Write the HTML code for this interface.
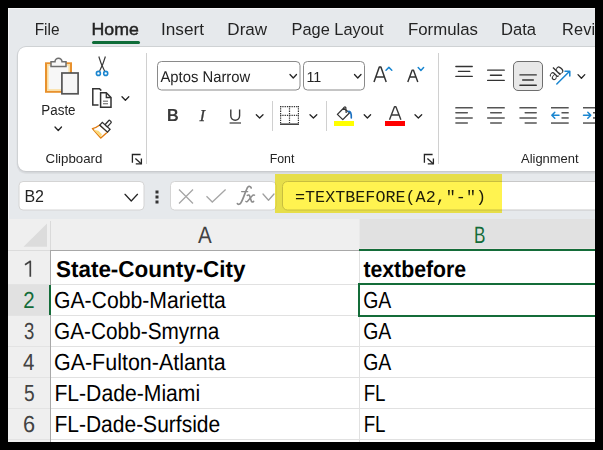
<!DOCTYPE html>
<html><head><meta charset="utf-8"><style>
html,body{margin:0;padding:0;background:#000;width:603px;height:450px;overflow:hidden}
svg{display:block}
text{white-space:pre}
</style></head><body>
<svg width="603" height="450" viewBox="0 0 603 450">
<rect x="0" y="0" width="603" height="450" fill="#000"/>
<rect x="8" y="8" width="587" height="434" fill="#e6e9ec"/>
<rect x="8" y="8" width="587" height="1" fill="#f4f5f6"/>
<rect x="8" y="8" width="1" height="434" fill="#f4f5f6"/>
<text x="34.65" y="35" font-family="Liberation Sans" font-size="16.3" font-weight="normal" fill="#242424" textLength="24.9" lengthAdjust="spacingAndGlyphs" >File</text>
<text x="160.94" y="35" font-family="Liberation Sans" font-size="16.3" font-weight="normal" fill="#242424" textLength="43.05" lengthAdjust="spacingAndGlyphs" >Insert</text>
<text x="227.35" y="35" font-family="Liberation Sans" font-size="16.3" font-weight="normal" fill="#242424" textLength="39.79" lengthAdjust="spacingAndGlyphs" >Draw</text>
<text x="291.49" y="35" font-family="Liberation Sans" font-size="16.3" font-weight="normal" fill="#242424" textLength="92.03" lengthAdjust="spacingAndGlyphs" >Page Layout</text>
<text x="407.97" y="35" font-family="Liberation Sans" font-size="16.3" font-weight="normal" fill="#242424" textLength="69.98" lengthAdjust="spacingAndGlyphs" >Formulas</text>
<text x="500.98" y="35" font-family="Liberation Sans" font-size="16.3" font-weight="normal" fill="#242424" textLength="35.06" lengthAdjust="spacingAndGlyphs" >Data</text>
<text x="562" y="35" font-family="Liberation Sans" font-size="16.3" font-weight="normal" fill="#242424" letter-spacing="0.2">Review</text>
<text x="91.53" y="35" font-family="Liberation Sans" font-size="16.5" font-weight="normal" fill="#242424" textLength="47.26" lengthAdjust="spacingAndGlyphs" stroke="#242424" stroke-width="0.45">Home</text>
<rect x="92" y="41" width="48" height="3" rx="1.5" fill="#0f6d39"/>
<rect x="16.5" y="47" width="620" height="127" rx="9.5" fill="#dcdfe2"/>
<rect x="17" y="46" width="620" height="127" rx="9" fill="#d5d8db"/>
<rect x="17.5" y="46.5" width="620" height="125.5" rx="8.5" fill="#c9cbce"/>
<rect x="18" y="47" width="620" height="124" rx="8" fill="#ffffff"/>
<rect x="146" y="53" width="1" height="111" fill="#d0d0d0"/>
<rect x="438" y="53" width="1" height="111" fill="#d0d0d0"/>
<rect x="272" y="101" width="1" height="30" fill="#d0d0d0"/>
<rect x="326" y="101" width="1" height="30" fill="#d0d0d0"/>
<text x="45.6" y="162.7" font-family="Liberation Sans" font-size="13" font-weight="normal" fill="#242424" textLength="56.73" lengthAdjust="spacingAndGlyphs" >Clipboard</text>
<text x="269.65" y="162.5" font-family="Liberation Sans" font-size="13" font-weight="normal" fill="#242424" textLength="24.78" lengthAdjust="spacingAndGlyphs" >Font</text>
<text x="521.0" y="162.5" font-family="Liberation Sans" font-size="13" font-weight="normal" fill="#242424" textLength="57.61" lengthAdjust="spacingAndGlyphs" >Alignment</text>
<path d="M132.4 162.8 V154.5 H140.6" fill="none" stroke="#242424" stroke-width="1.3"/><path d="M135.4 158.5 L141.2 163.8" fill="none" stroke="#242424" stroke-width="1.3"/><path d="M135.8 163.8 H141.4 V158.5" fill="none" stroke="#242424" stroke-width="1.3"/>
<path d="M424.4 162.8 V154.5 H432.6" fill="none" stroke="#242424" stroke-width="1.3"/><path d="M427.4 158.5 L433.2 163.8" fill="none" stroke="#242424" stroke-width="1.3"/><path d="M427.8 163.8 H433.4 V158.5" fill="none" stroke="#242424" stroke-width="1.3"/>
<rect x="46" y="63.3" width="25" height="28.5" fill="#f7f7f7" stroke="#e8912d" stroke-width="2"/>
<rect x="47.8" y="65" width="21.4" height="25" fill="none" stroke="#fbdc9a" stroke-width="1.5"/>
<path d="M51 61.8 H55 A3.5 3.5 0 0 1 62 61.8 H66 V66.5 H51 Z" fill="#f7f7f7" stroke="#6e6e6e" stroke-width="1.5"/>
<rect x="61.9" y="73" width="16.2" height="20.8" fill="#f7f7f7" stroke="#555" stroke-width="1.7"/>
<text x="41.34" y="115" font-family="Liberation Sans" font-size="14" font-weight="normal" fill="#242424" textLength="34.25" lengthAdjust="spacingAndGlyphs" >Paste</text>
<path d="M55 127 L58.25 130.5 L61.5 127" fill="none" stroke="#242424" stroke-width="1.3" stroke-linecap="round" stroke-linejoin="round"/>
<path d="M98.8 56.5 Q100.5 63 104.6 71" fill="none" stroke="#3a3a3a" stroke-width="1.15"/>
<path d="M105.4 56.5 Q103.7 63 99.6 71" fill="none" stroke="#3a3a3a" stroke-width="1.15"/>
<circle cx="98.4" cy="73.4" r="2" fill="none" stroke="#1a86d0" stroke-width="1.6"/>
<circle cx="105.7" cy="73.4" r="2" fill="none" stroke="#1a86d0" stroke-width="1.6"/>
<path d="M98.5 105 H92.8 V88.8 H99.5 L101.3 90.6" fill="none" stroke="#333" stroke-width="1.5"/>
<path d="M100.6 92.8 H106.3 L111 97.5 V107.2 H100.6 Z" fill="#fff" stroke="#333" stroke-width="1.5"/>
<path d="M106.3 92.8 V97.5 H111" fill="none" stroke="#333" stroke-width="1.3"/>
<rect x="103" y="100.6" width="5" height="1.2" fill="#777"/>
<rect x="103" y="103.1" width="5" height="1.2" fill="#777"/>
<path d="M122 96.8 L125.4 100.2 L128.8 96.8" fill="none" stroke="#242424" stroke-width="1.3" stroke-linecap="round" stroke-linejoin="round"/>
<g transform="translate(104.9 127.2) rotate(42)"><path d="M-5.2 1.8 L5.2 1.8 L4.2 10.8 L-8.3 9.4 Q-6 6 -5.2 1.8 Z" fill="#fff" stroke="#e07b10" stroke-width="1.4" stroke-linejoin="round"/><path d="M-6.8 9.4 L3.6 10.3 L2.6 7.3 L-2.5 7.0 Z" fill="#fbd97a"/><rect x="-5.2" y="-1.9" width="10.4" height="3.8" fill="#fff" stroke="#333" stroke-width="1.3"/><rect x="-1.6" y="-8.3" width="3.2" height="6.4" rx="1" fill="#fff" stroke="#333" stroke-width="1.3"/></g>
<rect x="157.5" y="61.5" width="142.5" height="28.5" rx="4" fill="#fff" stroke="#8a8a8a" stroke-width="1"/>
<text x="160.4" y="81.6" font-family="Liberation Sans" font-size="15.5" font-weight="normal" fill="#242424" textLength="89.83" lengthAdjust="spacingAndGlyphs" text-rendering="geometricPrecision">Aptos Narrow</text>
<path d="M290 74.5 L293.25 78 L296.5 74.5" fill="none" stroke="#242424" stroke-width="1.3" stroke-linecap="round" stroke-linejoin="round"/>
<rect x="303.5" y="61.5" width="61" height="28.5" rx="4" fill="#fff" stroke="#8a8a8a" stroke-width="1"/>
<text x="306.44" y="82" font-family="Liberation Sans" font-size="15" font-weight="normal" fill="#242424" textLength="14.88" lengthAdjust="spacingAndGlyphs" >11</text>
<path d="M354.5 74.5 L357.75 78 L361 74.5" fill="none" stroke="#242424" stroke-width="1.3" stroke-linecap="round" stroke-linejoin="round"/>
<path d="M374 82 L379.3 66.9 H380.9 L386.2 82 M376.2 77 H384" fill="none" stroke="#333" stroke-width="1.5" stroke-linejoin="round"/>
<path d="M386 70.2 L388.9 67.4 L391.8 70.2" fill="none" stroke="#1a86d0" stroke-width="1.5" stroke-linecap="round" stroke-linejoin="round"/>
<path d="M407.8 82 L412.2 70.1 H413.4 L417.8 82 M409.7 77 H416" fill="none" stroke="#333" stroke-width="1.45" stroke-linejoin="round"/>
<path d="M418.2 67.5 L420.9 70.5 L423.6 67.5" fill="none" stroke="#1a86d0" stroke-width="1.5" stroke-linecap="round" stroke-linejoin="round"/>
<text x="167" y="120.6" font-family="Liberation Sans" font-size="16.2" font-weight="bold" fill="#3a3a3a" >B</text>
<text x="199.5" y="120.5" font-family="Liberation Serif" font-size="17" font-weight="normal" fill="#3a3a3a" font-style="italic" stroke="#3a3a3a" stroke-width="0.25">I</text>
<path d="M230.8 109.5 V115.8 A4.4 4.4 0 0 0 239.6 115.8 V109.5" fill="none" stroke="#3a3a3a" stroke-width="1.4"/>
<rect x="229.6" y="122.3" width="11.4" height="1.4" fill="#555"/>
<path d="M256.3 114.8 L259.65 118 L263 114.8" fill="none" stroke="#242424" stroke-width="1.3" stroke-linecap="round" stroke-linejoin="round"/>
<g fill="none" stroke="#333" stroke-width="1.2" stroke-dasharray="1.3 1"><path d="M280.6 106 V123"/><path d="M298.4 106 V123"/><path d="M289.5 106 V123"/><path d="M280 106.6 H299"/><path d="M280 115.3 H299"/></g>
<rect x="280" y="123.4" width="19" height="1.6" fill="#444"/>
<path d="M310 114.8 L313.4 118 L316.8 114.8" fill="none" stroke="#242424" stroke-width="1.3" stroke-linecap="round" stroke-linejoin="round"/>
<path d="M337.4 114.4 L343.5 108.3 L349.6 112.8 L342.8 119.6 Z" fill="#fff" stroke="#333" stroke-width="1.3" stroke-linejoin="round"/>
<path d="M343.5 108.3 Q344.5 106 345.8 107.5 L346.2 113" fill="none" stroke="#333" stroke-width="1.2"/>
<path d="M348.3 111.5 Q351.5 110.5 351.3 118" fill="none" stroke="#1a6fc0" stroke-width="1.6" stroke-linecap="round"/>
<rect x="334" y="121" width="20" height="5" fill="#ffff00"/>
<path d="M364.2 114.8 L367.4 118 L370.6 114.8" fill="none" stroke="#242424" stroke-width="1.3" stroke-linecap="round" stroke-linejoin="round"/>
<path d="M389.5 119.7 L394.5 106.8 H395.9 L400.9 119.7 M391.5 115 H399" fill="none" stroke="#3a3a3a" stroke-width="1.4" stroke-linejoin="round"/>
<rect x="385" y="121" width="20" height="5" fill="#ff0000"/>
<path d="M415 114.8 L418.35 118 L421.7 114.8" fill="none" stroke="#242424" stroke-width="1.3" stroke-linecap="round" stroke-linejoin="round"/>
<rect x="455.2" y="65.8" width="17.69999999999999" height="1.4" rx="0.6" fill="#333"/><rect x="457.8" y="70.7" width="12.599999999999966" height="1.4" rx="0.6" fill="#333"/><rect x="455.2" y="75.7" width="17.69999999999999" height="1.4" rx="0.6" fill="#333"/>
<rect x="487" y="69.39999999999999" width="17.899999999999977" height="1.4" rx="0.6" fill="#333"/><rect x="489.8" y="74.5" width="12.399999999999977" height="1.4" rx="0.6" fill="#333"/><rect x="487" y="79.7" width="17.899999999999977" height="1.4" rx="0.6" fill="#333"/>
<rect x="513.5" y="61.5" width="29" height="29" rx="4.5" fill="#e8e8e8" stroke="#6e6e6e" stroke-width="1"/>
<rect x="519.3" y="74.2" width="17.600000000000023" height="1.4" rx="0.6" fill="#333"/><rect x="522" y="79.3" width="12" height="1.4" rx="0.6" fill="#333"/><rect x="519.3" y="84.6" width="17.600000000000023" height="1.4" rx="0.6" fill="#333"/>
<text x="0" y="0" font-family="Liberation Sans" font-size="14.5" fill="#333" transform="translate(553.6 81.6) rotate(-45)">ab</text>
<path d="M556.8 84 L569.6 71.2 M565 71.2 H569.8 V76" fill="none" stroke="#1a86d0" stroke-width="1.5" stroke-linecap="round" stroke-linejoin="round"/>
<path d="M578 74.6 L581.4 78.2 L584.8 74.6" fill="none" stroke="#242424" stroke-width="1.3" stroke-linecap="round" stroke-linejoin="round"/>
<rect x="455.2" y="107.05" width="17.69999999999999" height="1.5" rx="0.6" fill="#555"/><rect x="455.2" y="111.95" width="12.800000000000011" height="1.5" rx="0.6" fill="#555"/><rect x="455.2" y="117.15" width="17.69999999999999" height="1.5" rx="0.6" fill="#555"/><rect x="455.2" y="122.15" width="12.800000000000011" height="1.5" rx="0.6" fill="#555"/>
<rect x="487" y="107.05" width="17.899999999999977" height="1.5" rx="0.6" fill="#555"/><rect x="490" y="111.95" width="12" height="1.5" rx="0.6" fill="#555"/><rect x="487" y="117.15" width="17.899999999999977" height="1.5" rx="0.6" fill="#555"/><rect x="490" y="122.15" width="12" height="1.5" rx="0.6" fill="#555"/>
<rect x="519.3" y="107.05" width="17.600000000000023" height="1.5" rx="0.6" fill="#555"/><rect x="524.5" y="111.95" width="12.399999999999977" height="1.5" rx="0.6" fill="#555"/><rect x="519.3" y="117.15" width="17.600000000000023" height="1.5" rx="0.6" fill="#555"/><rect x="524.5" y="122.15" width="12.399999999999977" height="1.5" rx="0.6" fill="#555"/>
<rect x="551" y="107" width="17.7" height="1.5" fill="#555"/><rect x="561.5" y="112" width="7.2" height="1.5" fill="#555"/><rect x="561.5" y="117.2" width="7.2" height="1.5" fill="#555"/><rect x="551" y="122.3" width="17.7" height="1.5" fill="#555"/>
<path d="M559 115.3 H551.8 M554.8 112.3 L551.8 115.3 L554.8 118.3" fill="none" stroke="#1a86d0" stroke-width="1.5" stroke-linecap="round" stroke-linejoin="round"/>
<rect x="583" y="107" width="17.7" height="1.5" fill="#555"/><rect x="593" y="112" width="7.2" height="1.5" fill="#555"/><rect x="593" y="117.2" width="7.2" height="1.5" fill="#555"/><rect x="583" y="122.3" width="17.7" height="1.5" fill="#555"/>
<path d="M583.5 115.3 H590.8 M587.8 112.3 L590.8 115.3 L587.8 118.3" fill="none" stroke="#1a86d0" stroke-width="1.5" stroke-linecap="round" stroke-linejoin="round"/>
<rect x="19" y="181.5" width="125" height="28.5" rx="4" fill="#fff" stroke="#d4d4d4" stroke-width="1"/>
<text x="24.46" y="202.3" font-family="Liberation Sans" font-size="17" font-weight="normal" fill="#242424" textLength="19.57" lengthAdjust="spacingAndGlyphs" >B2</text>
<path d="M125 194.3 L131.25 201 L137.5 194.3" fill="none" stroke="#242424" stroke-width="1.25" stroke-linecap="round" stroke-linejoin="round"/>
<rect x="155.5" y="190.5" width="3" height="3" fill="#333"/><rect x="155.5" y="195.5" width="3" height="3" fill="#333"/><rect x="155.5" y="200.5" width="3" height="3" fill="#333"/>
<rect x="170.5" y="181.5" width="105.5" height="28.5" rx="4" fill="#fff" stroke="#d4d4d4" stroke-width="1"/>
<path d="M179 189.5 L193 203.5 M193 189.5 L179 203.5" fill="none" stroke="#a6a6a6" stroke-width="1.3"/>
<path d="M206.5 196.3 L212.3 202 L225.6 189.5" fill="none" stroke="#a6a6a6" stroke-width="1.3"/>
<g fill="none" stroke="#8c8c8c" stroke-linecap="round"><path d="M251.2 188 C250.8 186.3 249 185.9 247.9 187 C246 189 243.2 200 240.6 203.2 C239.6 204.5 237.9 204.6 237.4 203.6" stroke-width="1.7"/><path d="M241.6 191.6 H247.7" stroke-width="1.3"/><path d="M247.3 195.4 C248.6 194.5 249.4 195 249.9 196.6 L251.2 200.8 C251.6 202.2 252.6 202.4 253.6 201.4" stroke-width="1.6"/><path d="M254.5 195.2 C253.5 194.6 252.8 195 252 196 L247.8 201 C247 202 246.3 202 245.8 201.4" stroke-width="1.4"/></g>
<path d="M263 194 L268.5 200.3 L274 194" fill="none" stroke="#a0a0a0" stroke-width="1.3" stroke-linecap="round" stroke-linejoin="round"/>
<rect x="282.5" y="181.5" width="400" height="28.5" rx="5" fill="#fff" stroke="#c8c8c8" stroke-width="1"/>
<text x="295" y="201.5" font-family="Liberation Mono" font-size="16.75" fill="#1e1e1e" style="white-space:pre">=TEXTBEFORE(A2,"-")</text>
<rect x="275" y="174" width="227" height="39" fill="#fff350" style="mix-blend-mode:multiply"/>
<rect x="8" y="219" width="587" height="223" fill="#ffffff"/>
<rect x="8" y="219" width="587" height="31" fill="#efefef"/>
<rect x="8" y="251" width="42" height="191" fill="#efefef"/>
<rect x="359" y="219" width="236" height="31" fill="#e1e1e1"/><rect x="359" y="219" width="1" height="29" fill="#e9e9e9"/><rect x="359" y="248" width="236" height="1" fill="#ebe5e5"/>
<rect x="8" y="285" width="42" height="30" fill="#e1e1e1"/>
<path d="M23.5 246.8 L47 223.5 V246.8 Z" fill="#dcdcdc"/>
<rect x="50" y="221" width="1" height="29" fill="#dadada"/><rect x="50" y="251" width="1" height="191" fill="#a8a8a8"/>
<rect x="8" y="250" width="42" height="1" fill="#dcdcdc"/><rect x="50" y="250" width="545" height="1" fill="#a8a8a8"/>
<rect x="359" y="249" width="236" height="2" fill="#146c39"/>
<rect x="49" y="285" width="2" height="30" fill="#146c39"/>
<rect x="51" y="284" width="544" height="1" fill="#e1e1e1"/>
<rect x="8" y="284" width="42" height="1" fill="#e3e3e3"/>
<rect x="51" y="315" width="544" height="1" fill="#e1e1e1"/>
<rect x="8" y="315" width="42" height="1" fill="#e3e3e3"/>
<rect x="51" y="346" width="544" height="1" fill="#e1e1e1"/>
<rect x="8" y="346" width="42" height="1" fill="#e3e3e3"/>
<rect x="51" y="377" width="544" height="1" fill="#e1e1e1"/>
<rect x="8" y="377" width="42" height="1" fill="#e3e3e3"/>
<rect x="51" y="408" width="544" height="1" fill="#e1e1e1"/>
<rect x="8" y="408" width="42" height="1" fill="#e3e3e3"/>
<rect x="51" y="439" width="544" height="1" fill="#e1e1e1"/>
<rect x="8" y="439" width="42" height="1" fill="#e3e3e3"/>
<rect x="359" y="251" width="1" height="191" fill="#e1e1e1"/>
<text x="198.0" y="243" font-family="Liberation Sans" font-size="23.7" font-weight="normal" fill="#424242" textLength="13.72" lengthAdjust="spacingAndGlyphs" text-rendering="geometricPrecision">A</text>
<text x="474.07" y="243" font-family="Liberation Sans" font-size="23.7" font-weight="normal" fill="#146c39" textLength="11.42" lengthAdjust="spacingAndGlyphs" text-rendering="geometricPrecision">B</text>
<path d="M30.3 276.7 V261.3 L25 264.8" fill="none" stroke="#424242" stroke-width="1.7" stroke-linejoin="round"/>
<text x="23.21" y="307.9" font-family="Liberation Sans" font-size="23.3" font-weight="normal" fill="#146c39" textLength="11.4" lengthAdjust="spacingAndGlyphs" text-rendering="geometricPrecision">2</text>
<text x="24.0" y="338.9" font-family="Liberation Sans" font-size="23.3" font-weight="normal" fill="#424242" textLength="10.34" lengthAdjust="spacingAndGlyphs" text-rendering="geometricPrecision">3</text>
<text x="23.0" y="370" font-family="Liberation Sans" font-size="23.3" font-weight="normal" fill="#424242" textLength="11.41" lengthAdjust="spacingAndGlyphs" text-rendering="geometricPrecision">4</text>
<text x="24.0" y="401" font-family="Liberation Sans" font-size="23.3" font-weight="normal" fill="#424242" textLength="10.66" lengthAdjust="spacingAndGlyphs" text-rendering="geometricPrecision">5</text>
<text x="23.05" y="432.1" font-family="Liberation Sans" font-size="23.3" font-weight="normal" fill="#424242" textLength="12.09" lengthAdjust="spacingAndGlyphs" text-rendering="geometricPrecision">6</text>
<text x="56.0" y="276.7" font-family="Liberation Sans" font-size="23.1" font-weight="bold" fill="#000" textLength="189.5" lengthAdjust="spacingAndGlyphs" text-rendering="geometricPrecision">State-County-City</text>
<text x="363.4" y="276.6" font-family="Liberation Sans" font-size="23.1" font-weight="bold" fill="#000" textLength="102.73" lengthAdjust="spacingAndGlyphs" text-rendering="geometricPrecision">textbefore</text>
<text x="53.98" y="307.9" font-family="Liberation Sans" font-size="23.3" font-weight="normal" fill="#000" textLength="171.83" lengthAdjust="spacingAndGlyphs" text-rendering="geometricPrecision">GA-Cobb-Marietta</text>
<text x="363.15" y="307.9" font-family="Liberation Sans" font-size="23.3" font-weight="normal" fill="#000" textLength="28.09" lengthAdjust="spacingAndGlyphs" text-rendering="geometricPrecision">GA</text>
<text x="54.0" y="338.95" font-family="Liberation Sans" font-size="23.3" font-weight="normal" fill="#000" textLength="165.32" lengthAdjust="spacingAndGlyphs" text-rendering="geometricPrecision">GA-Cobb-Smyrna</text>
<text x="363.15" y="338.95" font-family="Liberation Sans" font-size="23.3" font-weight="normal" fill="#000" textLength="28.09" lengthAdjust="spacingAndGlyphs" text-rendering="geometricPrecision">GA</text>
<text x="53.97" y="370.0" font-family="Liberation Sans" font-size="23.3" font-weight="normal" fill="#000" textLength="171.74" lengthAdjust="spacingAndGlyphs" text-rendering="geometricPrecision">GA-Fulton-Atlanta</text>
<text x="363.15" y="370.0" font-family="Liberation Sans" font-size="23.3" font-weight="normal" fill="#000" textLength="28.09" lengthAdjust="spacingAndGlyphs" text-rendering="geometricPrecision">GA</text>
<text x="54.38" y="401.04999999999995" font-family="Liberation Sans" font-size="23.3" font-weight="normal" fill="#000" textLength="145.84" lengthAdjust="spacingAndGlyphs" text-rendering="geometricPrecision">FL-Dade-Miami</text>
<text x="363.69" y="401.04999999999995" font-family="Liberation Sans" font-size="23.3" font-weight="normal" fill="#000" textLength="21.84" lengthAdjust="spacingAndGlyphs" text-rendering="geometricPrecision">FL</text>
<text x="54.39" y="432.09999999999997" font-family="Liberation Sans" font-size="23.3" font-weight="normal" fill="#000" textLength="165.84" lengthAdjust="spacingAndGlyphs" text-rendering="geometricPrecision">FL-Dade-Surfside</text>
<text x="363.69" y="432.09999999999997" font-family="Liberation Sans" font-size="23.3" font-weight="normal" fill="#000" textLength="21.84" lengthAdjust="spacingAndGlyphs" text-rendering="geometricPrecision">FL</text>
<rect x="359" y="284" width="300" height="32" fill="none" stroke="#146c39" stroke-width="2"/>
<rect x="595" y="0" width="8" height="450" fill="#000"/><rect x="0" y="442" width="603" height="8" fill="#000"/>
</svg>
</body></html>
